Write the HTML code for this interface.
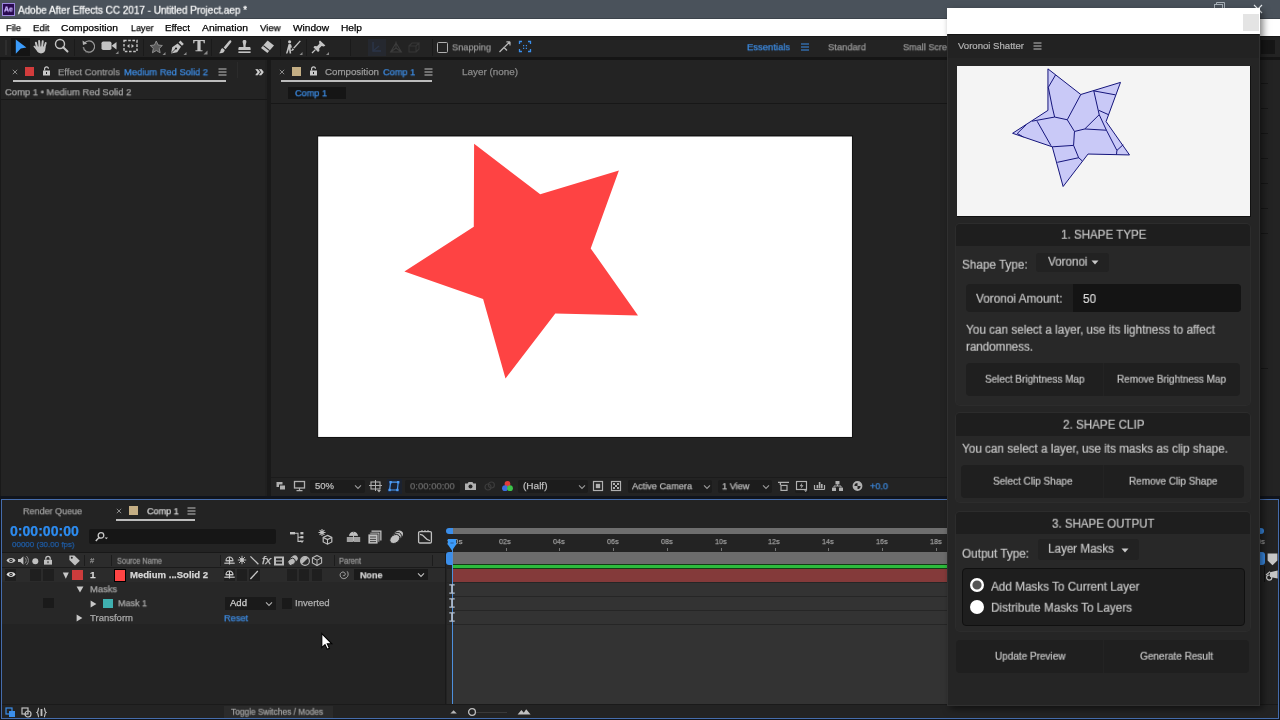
<!DOCTYPE html>
<html lang="en"><head><meta charset="utf-8"><title>Adobe After Effects CC 2017 - Untitled Project.aep</title>
<style>
html,body{margin:0;padding:0;}
body{width:1280px;height:720px;position:relative;overflow:hidden;background:#141414;font-family:"Liberation Sans",sans-serif;}
body>div,body>span,body>svg{position:absolute;display:block;}
.s{-webkit-text-stroke:0.25px currentColor;}
.s2{-webkit-text-stroke:0.2px currentColor;}
.t{white-space:nowrap;transform-origin:0 0;line-height:1;will-change:transform;}
</style></head>
<body>
<div style="left:0px;top:0px;width:1280px;height:720px;background:#191919;"></div>
<div style="left:0px;top:0px;width:1280px;height:19px;background:#4a525b;"></div>
<div style="left:2px;top:2.5px;width:13px;height:13.0px;background:#2a0a52;box-sizing:border-box;border:1px solid #9a86dc;"></div>
<div style="left:0px;top:18px;width:1280px;height:1px;background:#3c434b;"></div>
<span class="t s" style="left:4px;top:9.1px;font-size:7px;color:#c9b6ff;font-weight:bold;transform:translateY(-50%) scaleX(0.9829);">Ae</span>
<span class="t s" style="left:18px;top:9.5px;font-size:10.5px;color:#ffffff;transform:translateY(-50%) scaleX(0.9462);">Adobe After Effects CC 2017 - Untitled Project.aep *</span>
<svg style="left:1213px;top:1px;" width="14" height="8" viewBox="0 0 14 8"><rect x="1.5" y="3.5" width="8" height="6" fill="none" stroke="#a8b0b8" stroke-width="1"/><path d="M3.5 3.5V1.5H11.5V7.5H9.5" fill="none" stroke="#a8b0b8" stroke-width="1"/></svg>
<svg style="left:1252px;top:2px;" width="14" height="14" viewBox="0 0 14 14"><path d="M2 3L10 11M10 3L2 11" stroke="#e8ecf0" stroke-width="1.1" fill="none"/></svg>
<div style="left:0px;top:19px;width:1280px;height:17px;background:#ffffff;"></div>
<span class="t s" style="left:6.4px;top:27.5px;font-size:9.75px;color:#000000;transform:translateY(-50%) scaleX(0.9543);">File</span>
<span class="t s" style="left:33px;top:27.5px;font-size:9.75px;color:#000000;transform:translateY(-50%) scaleX(0.9814);">Edit</span>
<span class="t s" style="left:61px;top:27.5px;font-size:9.75px;color:#000000;transform:translateY(-50%) scaleX(1.0516);">Composition</span>
<span class="t s" style="left:130.5px;top:27.5px;font-size:9.75px;color:#000000;transform:translateY(-50%) scaleX(0.9225);">Layer</span>
<span class="t s" style="left:165px;top:27.5px;font-size:9.75px;color:#000000;transform:translateY(-50%) scaleX(1.0095);">Effect</span>
<span class="t s" style="left:202px;top:27.5px;font-size:9.75px;color:#000000;transform:translateY(-50%) scaleX(1.0609);">Animation</span>
<span class="t s" style="left:260px;top:27.5px;font-size:9.75px;color:#000000;transform:translateY(-50%) scaleX(0.9776);">View</span>
<span class="t s" style="left:293px;top:27.5px;font-size:9.75px;color:#000000;transform:translateY(-50%) scaleX(1.0378);">Window</span>
<span class="t s" style="left:341px;top:27.5px;font-size:9.75px;color:#000000;transform:translateY(-50%) scaleX(1.0467);">Help</span>
<div style="left:0px;top:36px;width:1280px;height:21px;background:#232323;"></div>
<div style="left:0px;top:57px;width:1280px;height:3px;background:#151515;"></div>
<div style="left:0px;top:36px;width:1280px;height:1px;background:#181818;"></div>
<div style="left:5px;top:40px;width:2px;height:15px;background:#2e2e2e;"></div>
<div style="left:11px;top:37.5px;width:18.5px;height:18.0px;background:#141414;"></div>
<svg style="left:11px;top:38px;" width="19" height="19" viewBox="0 0 19 19"><path d="M4.8 1.4L15.4 9.6L9.8 10.6L4.8 15.8Z" fill="#3b9bfa"/></svg>
<svg style="left:31px;top:38px;" width="20" height="19" viewBox="0 0 20 19"><g fill="#c4c4c4"><rect x="5.2" y="3.6" width="2" height="8" rx="1" transform="rotate(-14 6.2 10)"/><rect x="7.6" y="2" width="2" height="9" rx="1" transform="rotate(-4 8.6 10)"/><rect x="10" y="2.2" width="2" height="9" rx="1" transform="rotate(6 11 10)"/><rect x="12.3" y="3.8" width="1.9" height="8" rx="0.95" transform="rotate(16 13.2 10)"/><path d="M5.4 8.6H14.4V11C14.4 13.8 12.6 15.4 10 15.4C7.6 15.4 6.6 14.4 5.6 12.6L2.6 8.8C2.2 7.8 3.4 7.2 4.2 8L5.6 9.6Z"/></g></svg>
<svg style="left:53.2px;top:36.4px;" width="18" height="19" viewBox="0 0 18 19"><circle cx="7" cy="8" r="4.5" fill="none" stroke="#c4c4c4" stroke-width="1.4"/><path d="M10.2 11.2L14.5 15.5" stroke="#c4c4c4" stroke-width="2" stroke-linecap="round"/></svg>
<div style="left:74px;top:39px;width:1px;height:17px;background:#1a1a1a;"></div>
<svg style="left:80px;top:37.4px;" width="18" height="19" viewBox="0 0 18 19"><path d="M4.5 6.2A5.6 5.6 0 1 1 3.4 10" fill="none" stroke="#9a9a9a" stroke-width="1.3"/><path d="M9 15.6A5.6 5.6 0 0 1 3.4 10" fill="none" stroke="#777" stroke-width="1.2" stroke-dasharray="1.2 1.2"/><path d="M2.5 3.5L3 8L7.2 6.6Z" fill="#b0b0b0"/></svg>
<svg style="left:100px;top:37px;" width="20" height="19" viewBox="0 0 20 19"><rect x="1.5" y="4.5" width="10" height="8.5" rx="1.8" fill="#c4c4c4"/><path d="M11.5 8.7L16.5 5V12.5Z" fill="#c4c4c4"/><path d="M18.5 14V17H15.5Z" fill="#8a8a8a"/></svg>
<svg style="left:122px;top:37px;" width="18" height="19" viewBox="0 0 18 19"><rect x="2" y="3.5" width="13" height="11" fill="none" stroke="#c4c4c4" stroke-width="1.4" stroke-dasharray="2.6 1.6"/><path d="M5 9L7.5 7V11ZM12 9L9.5 7V11Z" fill="#c4c4c4"/></svg>
<div style="left:143px;top:39px;width:1px;height:17px;background:#1a1a1a;"></div>
<svg style="left:147px;top:38px;" width="20" height="19" viewBox="0 0 20 19"><path d="M9 2.6L11 7L15.6 7.5L12.2 10.7L13.2 15.4L9 13L4.8 15.4L5.8 10.7L2.4 7.5L7 7Z" fill="#5a5a5a" stroke="#929292" stroke-width="1" transform="translate(1,0.6) scale(.92)"/><path d="M18.5 14V17H15.5Z" fill="#8a8a8a"/></svg>
<svg style="left:168px;top:38px;" width="20" height="19" viewBox="0 0 20 19"><path d="M3 15.5L4.2 9.2L9.6 5.4L13 8.8L9.2 14.2Z" fill="#c4c4c4"/><path d="M10.6 4.4L12.4 2.6L15.8 6L14 7.8Z" fill="#c4c4c4"/><circle cx="8" cy="10.5" r="1.1" fill="#232323"/><path d="M3 15.5L7.4 11" stroke="#232323" stroke-width=".8"/><path d="M18.5 14V17H15.5Z" fill="#8a8a8a"/></svg>
<span class="t s" style="left:192.5px;top:45.8px;font-size:16px;color:#c4c4c4;font-weight:bold;font-family:'Liberation Serif',serif;transform:translateY(-50%) scaleX(1.1245);">T</span>
<svg style="left:203px;top:50px;" width="5" height="5" viewBox="0 0 5 5"><path d="M4.5 0.5V4.5H0.5Z" fill="#8a8a8a"/></svg>
<div style="left:211px;top:39px;width:1px;height:17px;background:#1a1a1a;"></div>
<svg style="left:216px;top:38px;" width="18" height="19" viewBox="0 0 18 19"><path d="M14.6 2.2C15.6 2.8 15.6 3.8 15 4.6L9.6 11.2L7.6 9.6L13 3C13.4 2.4 14 2 14.6 2.2Z" fill="#c4c4c4"/><path d="M7 10.4L8.8 12C8.6 14.4 6 15.8 3 15.2C4.6 14.4 4.4 12.6 5 11.6C5.4 10.8 6.2 10.2 7 10.4Z" fill="#c4c4c4"/></svg>
<svg style="left:235px;top:38px;" width="19" height="19" viewBox="0 0 19 19"><path d="M7.6 3.4C7.6 1.6 11.4 1.6 11.4 3.4C11.4 5 10.4 6 10.6 9H14.4C15.2 9 15.6 9.6 15.6 10.4V12H3.4V10.4C3.4 9.6 3.8 9 4.6 9H8.4C8.6 6 7.6 5 7.6 3.4Z" fill="#c4c4c4"/><rect x="3.4" y="13.4" width="12.2" height="1.6" fill="#c4c4c4"/></svg>
<svg style="left:258px;top:38px;" width="19" height="19" viewBox="0 0 19 19"><path d="M9.6 2.6L16 7.6L9.4 15L3 10Z" fill="#c4c4c4"/><path d="M5.4 7.6L11.6 12.6" stroke="#232323" stroke-width="1.2"/></svg>
<div style="left:280px;top:39px;width:1px;height:17px;background:#1a1a1a;"></div>
<svg style="left:284px;top:38px;" width="20" height="19" viewBox="0 0 20 19"><circle cx="5.6" cy="3.8" r="1.6" fill="#c4c4c4"/><path d="M4.6 6L7 6.2L8 9.4L6.6 9.8L7.2 15.4H5.6L5 11L3.4 15.4H2L3.6 9.6Z" fill="#c4c4c4"/><path d="M15.8 2.4L16.8 3.2L10.4 10.6L9.2 9.8Z" fill="#c4c4c4"/><path d="M8.8 10.2L10 11.2C9.6 12.6 8 13.2 6.8 12.8C7.8 12.2 7.8 10.8 8.8 10.2Z" fill="#c4c4c4"/><path d="M18.5 14V17H15.5Z" fill="#8a8a8a"/></svg>
<div style="left:306px;top:39px;width:1px;height:17px;background:#1a1a1a;"></div>
<svg style="left:309px;top:38px;" width="22" height="19" viewBox="0 0 22 19"><path d="M11 2.4L16.4 7.6L14.8 8.4L12.6 8L10.2 10.6L10.4 13L9 14L4.4 9.2L5.6 8L8 8.2L10.4 5.8L10 3.6Z" fill="#c4c4c4"/><path d="M6.4 11.6L3 15" stroke="#c4c4c4" stroke-width="1.3"/><path d="M20 14V17H17Z" fill="#8a8a8a"/></svg>
<div style="left:350px;top:39px;width:1px;height:17px;background:#1a1a1a;"></div>
<div style="left:368px;top:39px;width:18px;height:17px;background:#25282f;"></div>
<svg style="left:368px;top:38px;" width="18" height="19" viewBox="0 0 18 19"><path d="M5 4V13H13" fill="none" stroke="#2b3549" stroke-width="1.4"/><path d="M5 13L11 8" stroke="#2b3549" stroke-width="1.2"/></svg>
<svg style="left:387px;top:38px;" width="18" height="19" viewBox="0 0 18 19"><path d="M9 3.5V10M9 10L3.6 14M9 10L14.4 14M3.6 14H14.4L9 5Z" fill="none" stroke="#3c3c3c" stroke-width="1.1"/></svg>
<svg style="left:405px;top:38px;" width="18" height="19" viewBox="0 0 18 19"><path d="M4 8H11V14H4ZM4 8L7 5H14L11 8M14 5V11L11 14" fill="none" stroke="#363636" stroke-width="1.1"/></svg>
<div style="left:432px;top:39px;width:1px;height:17px;background:#1a1a1a;"></div>
<div style="left:437px;top:42px;width:11px;height:11px;background:transparent;box-sizing:border-box;border:1.3px solid #b0b0b0;border-radius:1.5px;"></div>
<span class="t s" style="left:452px;top:48px;font-size:9.25px;color:#969696;transform:translateY(-50%) scaleX(0.9976);">Snapping</span>
<svg style="left:497px;top:39px;" width="16" height="16" viewBox="0 0 16 16"><path d="M2.5 13L7 8.5L10 11.5" fill="none" stroke="#b8b8b8" stroke-width="1.3"/><path d="M7.5 8L13 2.8M13 2.8H9.4M13 2.8V6.4" fill="none" stroke="#b8b8b8" stroke-width="1.2"/></svg>
<svg style="left:517px;top:39px;" width="16" height="16" viewBox="0 0 16 16"><path d="M2.5 5V2.5H5M11 2.5H13.5V5M13.5 10V12.5H11M5 12.5H2.5V10" fill="none" stroke="#3b8eea" stroke-width="1.3"/><path d="M6 6H7.2V7.2H6ZM8.8 6H10V7.2H8.8ZM6 8.8H7.2V10H6ZM8.8 8.8H10V10H8.8Z" fill="#3b8eea"/></svg>
<span class="t s" style="left:747px;top:47px;font-size:9.5px;color:#3d8de6;transform:translateY(-50%) scaleX(0.9928);">Essentials</span>
<svg style="left:800px;top:42px;" width="10" height="10" viewBox="0 0 10 10"><path d="M1 2H9M1 5H9M1 8H9" stroke="#3b8eea" stroke-width="1.1"/></svg>
<span class="t s" style="left:828px;top:47px;font-size:9.5px;color:#9a9a9a;transform:translateY(-50%) scaleX(0.9854);">Standard</span>
<span class="t s" style="left:903px;top:47px;font-size:9.5px;color:#9a9a9a;transform:translateY(-50%) scaleX(0.9567);">Small Scree</span>
<div style="left:1261px;top:40px;width:14px;height:14px;background:#161616;"></div>
<div style="left:1px;top:60px;width:266px;height:436px;background:#232323;"></div>
<div style="left:265px;top:60px;width:2px;height:436px;background:#202020;"></div>
<svg style="left:12.4px;top:69.3px;" width="6" height="6" viewBox="0 0 6 6"><path d="M0.8 0.8L5.2 5.2M5.2 0.8L0.8 5.2" stroke="#8a8a8a" stroke-width="1"/></svg>
<div style="left:25.4px;top:66.5px;width:9.0px;height:9.0px;background:#d23c3c;"></div>
<svg style="left:42px;top:66px;" width="9" height="10" viewBox="0 0 9 10"><rect x="1" y="4.5" width="7" height="5" fill="#c8c8c8"/><path d="M2.6 4.5V2.8A1.9 1.9 0 0 1 6.4 2.8" fill="none" stroke="#c8c8c8" stroke-width="1.2"/><rect x="4" y="6" width="1" height="2" fill="#232323"/></svg>
<span class="t s" style="left:57.8px;top:72px;font-size:9.5px;color:#9a9a9a;transform:translateY(-50%) scaleX(0.9945);">Effect Controls</span>
<span class="t s" style="left:124px;top:72px;font-size:9.5px;color:#3d8de6;transform:translateY(-50%) scaleX(0.9819);">Medium Red Solid 2</span>
<svg style="left:218px;top:68px;" width="9" height="8" viewBox="0 0 9 8"><path d="M0.5 1H8.5M0.5 4H8.5M0.5 7H8.5" stroke="#c0c0c0" stroke-width="1.1"/></svg>
<span class="t s" style="left:255px;top:71px;font-size:14px;color:#d0d0d0;font-weight:bold;transform:translateY(-50%) scaleX(1.1543);">»</span>
<div style="left:13px;top:80px;width:213px;height:2px;background:#bcbcbc;"></div>
<span class="t s" style="left:5.4px;top:92px;font-size:9.5px;color:#a8a8a8;transform:translateY(-50%) scaleX(0.9904);">Comp 1 • Medium Red Solid 2</span>
<div style="left:1px;top:99px;width:266px;height:1px;background:#171717;"></div>
<div style="left:237px;top:62px;width:1px;height:16px;background:#2b2b2b;"></div>
<div style="left:271px;top:60px;width:987px;height:436px;background:#232323;"></div>
<svg style="left:279px;top:69.3px;" width="6" height="6" viewBox="0 0 6 6"><path d="M0.8 0.8L5.2 5.2M5.2 0.8L0.8 5.2" stroke="#8a8a8a" stroke-width="1"/></svg>
<div style="left:292px;top:66.5px;width:9px;height:9.0px;background:#c4ae84;"></div>
<svg style="left:309px;top:66px;" width="9" height="10" viewBox="0 0 9 10"><rect x="1" y="4.5" width="7" height="5" fill="#c8c8c8"/><path d="M2.6 4.5V2.8A1.9 1.9 0 0 1 6.4 2.8" fill="none" stroke="#c8c8c8" stroke-width="1.2"/><rect x="4" y="6" width="1" height="2" fill="#232323"/></svg>
<span class="t s" style="left:324.7px;top:72px;font-size:9.5px;color:#9a9a9a;transform:translateY(-50%) scaleX(1.0225);">Composition</span>
<span class="t s" style="left:382.5px;top:72px;font-size:9.5px;color:#3d8de6;transform:translateY(-50%) scaleX(0.968);">Comp 1</span>
<svg style="left:424px;top:68px;" width="9" height="8" viewBox="0 0 9 8"><path d="M0.5 1H8.5M0.5 4H8.5M0.5 7H8.5" stroke="#c0c0c0" stroke-width="1.1"/></svg>
<div style="left:280.5px;top:80px;width:151.8px;height:2px;background:#bcbcbc;"></div>
<span class="t s" style="left:462px;top:72px;font-size:9.5px;color:#8a8a8a;transform:translateY(-50%) scaleX(1.0394);">Layer (none)</span>
<div style="left:288px;top:87px;width:58px;height:11.5px;background:#151515;"></div>
<span class="t s" style="left:295px;top:92.5px;font-size:9.5px;color:#3d8de6;transform:translateY(-50%) scaleX(0.962);">Comp 1</span>
<div style="left:271px;top:102.5px;width:987px;height:1.0px;background:#171717;"></div>
<svg style="left:316px;top:134px;" width="540" height="306" viewBox="316 134 540 306"><rect x="317.7" y="136" width="534.7" height="301.4" fill="#ffffff" stroke="#000" stroke-width="0.9"/><polygon points="474.1,143.7 540.2,194.3 618.9,170.4 590.7,248.4 638,315.6 555.3,313.4 505.5,378.4 483.1,299 404.4,271.5 473.8,226.8" fill="#fe4343"/></svg>
<div style="left:271px;top:477px;width:987px;height:1px;background:#1b1b1b;"></div>
<div style="left:310px;top:479.5px;width:55px;height:13.5px;background:#1c1c1c;border-radius:2px;"></div>
<div style="left:405px;top:479.5px;width:55px;height:13.5px;background:#1c1c1c;border-radius:2px;"></div>
<div style="left:518px;top:479.5px;width:70px;height:13.5px;background:#1c1c1c;border-radius:2px;"></div>
<div style="left:627.5px;top:479.5px;width:84.5px;height:13.5px;background:#1c1c1c;border-radius:2px;"></div>
<div style="left:717.5px;top:479.5px;width:54.0px;height:13.5px;background:#1c1c1c;border-radius:2px;"></div>
<div style="left:794.5px;top:479.5px;width:14.5px;height:13.5px;background:#1c1c1c;border-radius:2px;"></div>
<svg style="left:275px;top:480px;" width="12" height="12" viewBox="0 0 12 12"><rect x="1.5" y="2" width="6" height="5" fill="#b0b0b0"/><rect x="4.5" y="5" width="6" height="5" fill="#b0b0b0" stroke="#232323" stroke-width="1"/></svg>
<svg style="left:293px;top:480px;" width="13" height="12" viewBox="0 0 13 12"><rect x="1.5" y="1.5" width="10" height="6.5" fill="none" stroke="#b0b0b0" stroke-width="1.3"/><path d="M6.5 8V10.4M3.5 10.6H9.5" stroke="#b0b0b0" stroke-width="1.2"/></svg>
<span class="t s" style="left:314.7px;top:486px;font-size:9.5px;color:#bdbdbd;transform:translateY(-50%) scaleX(1.0044);">50%</span>
<svg style="left:354.4px;top:483.5px;" width="8" height="6" viewBox="0 0 8 6"><path d="M1 1.4L4 4.4L7 1.4" fill="none" stroke="#9a9a9a" stroke-width="1.1"/></svg>
<svg style="left:369px;top:480px;" width="13" height="13" viewBox="0 0 13 13"><rect x="2" y="2" width="9" height="7" fill="none" stroke="#b0b0b0" stroke-width="1.1"/><path d="M6.5 0V11M0 5.5H13" stroke="#b0b0b0" stroke-width="1"/><path d="M8 10H12L10 12.5Z" fill="#b0b0b0"/></svg>
<div style="left:386.5px;top:478.5px;width:15.0px;height:15.0px;background:#1b2230;"></div>
<svg style="left:387px;top:479px;" width="14" height="14" viewBox="0 0 14 14"><path d="M3.6 3.2H11.2L10.4 11H2.6Z" fill="none" stroke="#4b9bf5" stroke-width="1.2"/><rect x="2.4" y="2" width="2.4" height="2.4" fill="#4b9bf5"/><rect x="10" y="2" width="2.4" height="2.4" fill="#4b9bf5"/><rect x="1.4" y="9.8" width="2.4" height="2.4" fill="#4b9bf5"/><rect x="9.2" y="9.8" width="2.4" height="2.4" fill="#4b9bf5"/></svg>
<span class="t s" style="left:410.4px;top:486px;font-size:9.5px;color:#6c6c6c;transform:translateY(-50%) scaleX(0.9976);">0:00:00:00</span>
<svg style="left:464px;top:480px;" width="13" height="12" viewBox="0 0 13 12"><path d="M1 3.4H3.6L4.6 2H8.4L9.4 3.4H12V10H1Z" fill="#b0b0b0"/><circle cx="6.5" cy="6.6" r="2" fill="#232323"/></svg>
<svg style="left:483px;top:480px;" width="13" height="12" viewBox="0 0 13 12"><circle cx="5" cy="7" r="3" fill="none" stroke="#3c3c3c" stroke-width="1.2"/><circle cx="8.4" cy="5" r="3" fill="none" stroke="#3c3c3c" stroke-width="1.2"/></svg>
<svg style="left:501px;top:480px;" width="13" height="13" viewBox="0 0 13 13"><circle cx="6.5" cy="4" r="2.9" fill="#e23c3c"/><circle cx="4" cy="8.2" r="2.9" fill="#3c6ee2"/><circle cx="9" cy="8.2" r="2.9" fill="#3cc24a"/></svg>
<span class="t s" style="left:522.5px;top:486px;font-size:9.5px;color:#bdbdbd;transform:translateY(-50%) scaleX(1.0545);">(Half)</span>
<svg style="left:577.5px;top:483.5px;" width="8" height="6" viewBox="0 0 8 6"><path d="M1 1.4L4 4.4L7 1.4" fill="none" stroke="#9a9a9a" stroke-width="1.1"/></svg>
<svg style="left:592px;top:480px;" width="12" height="12" viewBox="0 0 12 12"><rect x="1.5" y="1.5" width="9" height="9" fill="none" stroke="#b0b0b0" stroke-width="1.2"/><rect x="3.8" y="3.8" width="4.4" height="4.4" fill="#b0b0b0"/></svg>
<svg style="left:610px;top:480px;" width="12" height="12" viewBox="0 0 12 12"><rect x="1.5" y="1.5" width="9" height="9" fill="none" stroke="#b0b0b0" stroke-width="1.2"/><path d="M3 3H5V5H3ZM7 3H9V5H7ZM5 5H7V7H5ZM3 7H5V9H3ZM7 7H9V9H7Z" fill="#b0b0b0"/></svg>
<span class="t s" style="left:631.9px;top:486px;font-size:9.5px;color:#bdbdbd;transform:translateY(-50%) scaleX(0.9645);">Active Camera</span>
<svg style="left:702.8px;top:483.5px;" width="8" height="6" viewBox="0 0 8 6"><path d="M1 1.4L4 4.4L7 1.4" fill="none" stroke="#9a9a9a" stroke-width="1.1"/></svg>
<span class="t s" style="left:722px;top:486px;font-size:9.5px;color:#bdbdbd;transform:translateY(-50%) scaleX(0.9667);">1 View</span>
<svg style="left:761.8px;top:483.5px;" width="8" height="6" viewBox="0 0 8 6"><path d="M1 1.4L4 4.4L7 1.4" fill="none" stroke="#9a9a9a" stroke-width="1.1"/></svg>
<svg style="left:777px;top:480px;" width="13" height="12" viewBox="0 0 13 12"><path d="M1 2.4H12M3.4 2.4V5" stroke="#b0b0b0" stroke-width="1.3"/><rect x="4" y="5.4" width="6" height="5" fill="none" stroke="#b0b0b0" stroke-width="1.2"/></svg>
<svg style="left:795px;top:480px;" width="13" height="12" viewBox="0 0 13 12"><rect x="1.5" y="1.5" width="10" height="8" fill="none" stroke="#b0b0b0" stroke-width="1.2"/><path d="M7.4 2.6L4.6 6.2H6.6L5.6 9L8.6 5.2H6.6Z" fill="#b0b0b0"/><path d="M9 10.2H12.4L10.7 12Z" fill="#b0b0b0"/></svg>
<svg style="left:813px;top:480px;" width="13" height="12" viewBox="0 0 13 12"><path d="M1.5 9.5H11.5M1.5 9.5V5M11.5 9.5V5" stroke="#b0b0b0" stroke-width="1.2" fill="none"/><rect x="3.6" y="5" width="1.6" height="3.4" fill="#b0b0b0"/><rect x="5.8" y="2" width="1.6" height="6.4" fill="#b0b0b0"/><rect x="8" y="4" width="1.6" height="4.4" fill="#b0b0b0"/></svg>
<svg style="left:831px;top:480px;" width="13" height="12" viewBox="0 0 13 12"><rect x="4.5" y="1" width="4" height="3.4" fill="#b0b0b0"/><rect x="1" y="7.6" width="4" height="3.4" fill="#b0b0b0"/><rect x="8" y="7.6" width="4" height="3.4" fill="#b0b0b0"/><path d="M6.5 4.4V6H3V7.6M6.5 6H10V7.6" fill="none" stroke="#b0b0b0" stroke-width="1"/></svg>
<svg style="left:851px;top:480px;" width="13" height="12" viewBox="0 0 13 12"><circle cx="6.5" cy="6" r="4" fill="none" stroke="#b0b0b0" stroke-width="1.8"/><path d="M6.5 2A4 4 0 0 1 10.5 6H6.5Z" fill="#b0b0b0"/><path d="M6.5 10A4 4 0 0 1 2.5 6H6.5Z" fill="#b0b0b0"/></svg>
<span class="t s" style="left:869.8px;top:486px;font-size:9.5px;color:#3d8de6;transform:translateY(-50%) scaleX(0.9592);">+0.0</span>
<div style="left:1261px;top:82.5px;width:7px;height:1.0px;background:#171717;"></div>
<div style="left:1261px;top:107.5px;width:7px;height:1.0px;background:#171717;"></div>
<div style="left:1261px;top:132.5px;width:7px;height:1.0px;background:#171717;"></div>
<div style="left:1261px;top:158.0px;width:7px;height:1.0px;background:#171717;"></div>
<div style="left:1261px;top:183.0px;width:7px;height:1.0px;background:#171717;"></div>
<div style="left:1261px;top:208.0px;width:7px;height:1.0px;background:#171717;"></div>
<div style="left:1261px;top:233.0px;width:7px;height:1.0px;background:#171717;"></div>
<div style="left:1261px;top:367.8px;width:7px;height:1.0px;background:#171717;"></div>
<div style="left:1258px;top:60px;width:2px;height:436px;background:#1c1c1c;"></div>
<div style="left:1260px;top:60px;width:20px;height:436px;background:#232323;"></div>
<div style="left:1261px;top:82.5px;width:7px;height:1.0px;background:#171717;"></div>
<div style="left:1261px;top:107.5px;width:7px;height:1.0px;background:#171717;"></div>
<div style="left:1261px;top:132.5px;width:7px;height:1.0px;background:#171717;"></div>
<div style="left:1261px;top:158.0px;width:7px;height:1.0px;background:#171717;"></div>
<div style="left:1261px;top:183.0px;width:7px;height:1.0px;background:#171717;"></div>
<div style="left:1261px;top:208.0px;width:7px;height:1.0px;background:#171717;"></div>
<div style="left:1261px;top:233.0px;width:7px;height:1.0px;background:#171717;"></div>
<div style="left:1261px;top:367.8px;width:7px;height:1.0px;background:#171717;"></div>
<div style="left:0px;top:496px;width:1280px;height:224px;background:#10141c;"></div>
<div style="left:1px;top:499px;width:1278px;height:220px;background:#456cab;"></div>
<div style="left:2px;top:500px;width:1276px;height:218px;background:#232323;"></div>
<span class="t s" style="left:23.4px;top:511px;font-size:9.5px;color:#a0a0a0;transform:translateY(-50%) scaleX(0.9482);">Render Queue</span>
<svg style="left:115.7px;top:508.3px;" width="6" height="6" viewBox="0 0 6 6"><path d="M0.8 0.8L5.2 5.2M5.2 0.8L0.8 5.2" stroke="#8a8a8a" stroke-width="1"/></svg>
<div style="left:129px;top:506px;width:9px;height:8.5px;background:#c4ae84;"></div>
<span class="t s" style="left:146.9px;top:511px;font-size:9.5px;color:#d8d8d8;transform:translateY(-50%) scaleX(0.9529);">Comp 1</span>
<svg style="left:187px;top:507px;" width="9" height="8" viewBox="0 0 9 8"><path d="M0.5 1H8.5M0.5 4H8.5M0.5 7H8.5" stroke="#c0c0c0" stroke-width="1.1"/></svg>
<div style="left:116.4px;top:519px;width:78.9px;height:2px;background:#bcbcbc;"></div>
<span class="t s" style="left:10.2px;top:531.3px;font-size:14px;color:#2d8cf0;font-weight:bold;transform:translateY(-50%) scaleX(1.0044);">0:00:00:00</span>
<span class="t s" style="left:11.7px;top:545px;font-size:8px;color:#1f5da6;transform:translateY(-50%) scaleX(0.9965);">00000 (30.00 fps)</span>
<div style="left:89px;top:528.5px;width:187px;height:15.0px;background:#161616;border-radius:2px;"></div>
<svg style="left:94px;top:530px;" width="16" height="13" viewBox="0 0 16 13"><circle cx="7" cy="5.4" r="2.8" fill="none" stroke="#c8c8c8" stroke-width="1.3"/><path d="M5 7.6L1.8 11" stroke="#c8c8c8" stroke-width="1.5"/><path d="M10.6 7.4H14L12.3 9.2Z" fill="#c8c8c8"/></svg>
<svg style="left:289px;top:529px;" width="16" height="16" viewBox="0 0 16 16"><rect x="1" y="3" width="5" height="2.4" fill="#c0c0c0"/><path d="M6 4.2H9V12.4H12M9 8.2H12" fill="none" stroke="#c0c0c0" stroke-width="1.1"/><rect x="11.4" y="3" width="3" height="2.4" fill="#c0c0c0"/><rect x="11.4" y="7" width="3" height="2.4" fill="#c0c0c0"/><path d="M11 11.6H15L13 14Z" fill="#c0c0c0"/></svg>
<svg style="left:317px;top:528px;" width="17" height="18" viewBox="0 0 17 18"><path d="M5 1V8M1.5 4.5H8.5M2.6 2.1L7.4 6.9M7.4 2.1L2.6 6.9" stroke="#c0c0c0" stroke-width="1.1"/><path d="M10.5 7.4L14.8 9.4V14L10.5 16.2L6.2 14V9.4Z" fill="none" stroke="#c0c0c0" stroke-width="1.2"/><path d="M6.2 9.4L10.5 11.6L14.8 9.4M10.5 11.6V16.2" fill="none" stroke="#c0c0c0" stroke-width="1.1"/></svg>
<svg style="left:345.6px;top:531px;" width="15" height="12" viewBox="0 0 15 12"><path d="M3 5.2A4.5 4.4 0 0 1 12 5.2Z" fill="#c0c0c0"/><rect x="0.8" y="6" width="13.4" height="5" fill="#c0c0c0" opacity=".8"/><path d="M7.5 1.6V10.4M3.4 5.4H11.6" stroke="#232323" stroke-width="1"/><path d="M7.5 2V10" stroke="#e0e0e0" stroke-width=".8"/></svg>
<svg style="left:367px;top:529px;" width="16" height="16" viewBox="0 0 16 16"><rect x="4.5" y="1.5" width="10" height="10" fill="#c0c0c0"/><rect x="2.8" y="3.2" width="10" height="10" fill="#c0c0c0" stroke="#232323" stroke-width=".8"/><rect x="1" y="5" width="10" height="10" fill="#c0c0c0" stroke="#232323" stroke-width=".8"/><path d="M3 8H9M3 10.4H9M3 12.6H9" stroke="#232323" stroke-width=".8"/></svg>
<svg style="left:388px;top:529px;" width="17" height="16" viewBox="0 0 17 16"><ellipse cx="10" cy="6" rx="5.4" ry="4" fill="#c0c0c0" transform="rotate(-35 10 6)"/><ellipse cx="8.4" cy="8" rx="5.4" ry="4" fill="#c0c0c0" stroke="#232323" stroke-width=".9" transform="rotate(-35 8.4 8)"/><ellipse cx="6.8" cy="10" rx="5.4" ry="4" fill="#c0c0c0" stroke="#232323" stroke-width=".9" transform="rotate(-35 6.8 10)"/></svg>
<svg style="left:417px;top:529px;" width="16" height="16" viewBox="0 0 16 16"><rect x="1.6" y="2.6" width="12.8" height="11.4" rx="1.2" fill="none" stroke="#c0c0c0" stroke-width="1.3"/><path d="M3 5.4C8 5.4 8 11.6 13 11.6" fill="none" stroke="#c0c0c0" stroke-width="1.2"/><path d="M5 2V1M8 2V1M11 2V1" stroke="#c0c0c0" stroke-width="1"/></svg>
<div style="left:2px;top:553px;width:444px;height:14px;background:#2c2c2c;"></div>
<div style="left:2px;top:552px;width:444px;height:1px;background:#181818;"></div>
<svg style="left:5.5px;top:557.0px;" width="10" height="7" viewBox="0 0 10 7"><path d="M0.5 3.5C2.6 0.3 7.4 0.3 9.5 3.5C7.4 6.7 2.6 6.7 0.5 3.5Z" fill="#c8c8c8"/><circle cx="5" cy="3.5" r="1.7" fill="#232323"/><circle cx="5" cy="3.5" r="0.7" fill="#c8c8c8"/></svg>
<svg style="left:17px;top:555px;" width="12" height="11" viewBox="0 0 12 11"><path d="M1 4H3.4L6.4 1.2V9.8L3.4 7H1Z" fill="#c0c0c0"/><path d="M8 2.6A4 4 0 0 1 8 8.4M9.4 1A6 6 0 0 1 9.4 10" fill="none" stroke="#8a8a8a" stroke-width="1"/></svg>
<svg style="left:32px;top:557.5px;" width="7" height="7" viewBox="0 0 7 7"><circle cx="3.3" cy="3.3" r="3" fill="#c0c0c0"/></svg>
<svg style="left:42.8px;top:554.5px;" width="10" height="11" viewBox="0 0 10 11"><rect x="1" y="4.8" width="8" height="4.8" fill="#c0c0c0"/><path d="M2.8 4.8V3.6A2.2 2.2 0 0 1 7.2 3.6V4.8" fill="none" stroke="#c0c0c0" stroke-width="1.3"/><rect x="4.5" y="6.2" width="1" height="2" fill="#232323"/></svg>
<svg style="left:68px;top:554px;" width="13" height="13" viewBox="0 0 13 13"><path d="M1.4 1.4H6.4L11.8 6.8L7 11.6L1.4 6Z" fill="#c0c0c0"/><circle cx="3.8" cy="3.8" r="1" fill="#232323"/></svg>
<div style="left:83.5px;top:555px;width:1.0px;height:11px;background:#1c1c1c;"></div>
<span class="t s" style="left:90px;top:560.7px;font-size:7.5px;color:#8a8a8a;transform:translateY(-50%) scaleX(1.0067);">#</span>
<div style="left:111px;top:555px;width:1px;height:11px;background:#1c1c1c;"></div>
<span class="t s" style="left:116.5px;top:560.5px;font-size:8.5px;color:#9a9a9a;transform:translateY(-50%) scaleX(0.864);">Source Name</span>
<div style="left:219.5px;top:555px;width:1.0px;height:11px;background:#1c1c1c;"></div>
<svg style="left:224.3px;top:555.8px;" width="11" height="9" viewBox="0 0 11 9"><path d="M2 4.7A3.5 3.7 0 0 1 9 4.7Z" fill="none" stroke="#c4c4c4" stroke-width="1.1"/><path d="M5.5 1V8.4M2 4.7H9" stroke="#c4c4c4" stroke-width="1.1" fill="none"/><path d="M0.3 7.2H10.7" stroke="#c4c4c4" stroke-width="1.2"/></svg>
<svg style="left:237px;top:555.3px;" width="10" height="10" viewBox="0 0 10 10"><circle cx="5" cy="5" r="1.9" fill="#c4c4c4"/><path d="M5 0.8V9.2M0.8 5H9.2M2 2L8 8M8 2L2 8" stroke="#c4c4c4" stroke-width=".9"/></svg>
<svg style="left:249px;top:555px;" width="11" height="11" viewBox="0 0 11 11"><path d="M1.4 1.4L9.4 9.2" stroke="#c4c4c4" stroke-width="1.3"/></svg>
<span class="t s" style="left:262.3px;top:559.8px;font-size:11px;color:#c4c4c4;font-style:italic;transform:translateY(-50%) scaleX(1.0861);">fx</span>
<svg style="left:273px;top:554.5px;" width="12" height="12" viewBox="0 0 12 12"><rect x="1" y="1.5" width="10" height="9" fill="#b8b8b8"/><rect x="3" y="3.4" width="6" height="2" fill="#232323"/><rect x="3" y="6.6" width="6" height="2" fill="#232323"/></svg>
<svg style="left:285.5px;top:554px;" width="13" height="13" viewBox="0 0 13 13"><ellipse cx="8" cy="5" rx="4" ry="3.2" fill="#b8b8b8" transform="rotate(-35 8 5)"/><ellipse cx="5.6" cy="7.8" rx="4" ry="3.2" fill="#b8b8b8" stroke="#232323" stroke-width=".9" transform="rotate(-35 5.6 7.8)"/></svg>
<svg style="left:298.5px;top:554.5px;" width="12" height="12" viewBox="0 0 12 12"><circle cx="6" cy="6" r="4.4" fill="none" stroke="#b8b8b8" stroke-width="1.2"/><path d="M2.9 9.1A4.4 4.4 0 0 1 9.1 2.9Z" fill="#b8b8b8"/></svg>
<svg style="left:311px;top:554px;" width="12" height="13" viewBox="0 0 12 13"><path d="M6 1.4L10.6 3.8V9L6 11.6L1.4 9V3.8Z" fill="none" stroke="#b8b8b8" stroke-width="1.1"/><path d="M1.4 3.8L6 6.2L10.6 3.8M6 6.2V11.6" fill="none" stroke="#b8b8b8" stroke-width="1"/></svg>
<div style="left:334px;top:555px;width:1px;height:11px;background:#1c1c1c;"></div>
<span class="t s" style="left:339px;top:560.5px;font-size:8.5px;color:#9a9a9a;transform:translateY(-50%) scaleX(0.8784);">Parent</span>
<div style="left:431.5px;top:555px;width:1.0px;height:11px;background:#1c1c1c;"></div>
<div style="left:2px;top:567px;width:444px;height:1px;background:#1b1b1b;"></div>
<div style="left:2px;top:568px;width:444px;height:14px;background:#2b2b2b;"></div>
<div style="left:4.8px;top:569px;width:11.0px;height:11.5px;background:#1f1f1f;"></div>
<svg style="left:5.5px;top:571.1px;" width="10" height="7" viewBox="0 0 10 7"><path d="M0.5 3.5C2.6 0.3 7.4 0.3 9.5 3.5C7.4 6.7 2.6 6.7 0.5 3.5Z" fill="#e0e0e0"/><circle cx="5" cy="3.5" r="1.7" fill="#232323"/><circle cx="5" cy="3.5" r="0.7" fill="#e0e0e0"/></svg>
<div style="left:30px;top:569px;width:11px;height:11.5px;background:#1f1f1f;"></div>
<div style="left:43px;top:569px;width:10.5px;height:11.5px;background:#1f1f1f;"></div>
<svg style="left:61.5px;top:571.8px;" width="8" height="8" viewBox="0 0 8 8"><path d="M0.8 0.6H6.8L3.8 6.8Z" fill="#c8c8c8"/></svg>
<div style="left:72px;top:569.5px;width:10.7px;height:10.5px;background:#cc3c3c;"></div>
<span class="t s" style="left:90px;top:575px;font-size:9.5px;color:#d6d6d6;font-weight:bold;transform:translateY(-50%) scaleX(1.0572);">1</span>
<div style="left:114px;top:569px;width:12px;height:12.5px;background:#ff4444;box-sizing:border-box;border:1px solid #000;"></div>
<span class="t s" style="left:130px;top:575px;font-size:9.5px;color:#d6d6d6;font-weight:bold;transform:translateY(-50%) scaleX(1.0052);">Medium ...Solid 2</span>
<div style="left:224px;top:569px;width:11.3px;height:11.5px;background:#1f1f1f;"></div>
<svg style="left:224.3px;top:570px;" width="11" height="9" viewBox="0 0 11 9"><path d="M2 4.7A3.5 3.7 0 0 1 9 4.7Z" fill="none" stroke="#d0d0d0" stroke-width="1.1"/><path d="M5.5 1V8.4M2 4.7H9" stroke="#d0d0d0" stroke-width="1.1" fill="none"/><path d="M0.3 7.2H10.7" stroke="#d0d0d0" stroke-width="1.2"/></svg>
<div style="left:237.2px;top:569px;width:10.3px;height:11.5px;background:#1f1f1f;"></div>
<div style="left:249.4px;top:569px;width:10.3px;height:11.5px;background:#1f1f1f;"></div>
<svg style="left:248px;top:569px;" width="12" height="12" viewBox="0 0 12 12"><path d="M2.4 10L9.8 2" stroke="#c8c8c8" stroke-width="1.3"/></svg>
<div style="left:287px;top:569px;width:10.2px;height:11.5px;background:#1f1f1f;"></div>
<div style="left:299.4px;top:569px;width:10.0px;height:11.5px;background:#1f1f1f;"></div>
<div style="left:311.8px;top:569px;width:10.2px;height:11.5px;background:#1f1f1f;"></div>
<svg style="left:337.2px;top:568px;" width="13" height="13" viewBox="0 0 13 13"><polyline points="6.0,7.3 6.1,7.5 6.3,7.6 6.6,7.7 6.9,7.7 7.2,7.7 7.5,7.6 7.7,7.3 8.0,7.1 8.1,6.7 8.2,6.3 8.2,5.8 8.1,5.4 7.8,5.0 7.5,4.6 7.0,4.3 6.5,4.1 5.9,4.1 5.3,4.1 4.7,4.4 4.2,4.7 3.7,5.2 3.4,5.8 3.2,6.5 3.2,7.3 3.3,8.0 3.6,8.8 4.1,9.4 4.8,10.0 5.5,10.3 6.4,10.6 7.3,10.6 8.2,10.3 9.1,9.9 9.8,9.3 10.5,8.5 10.9,7.6 11.1,6.5 11.0,5.4 10.8,4.4 10.2,3.4" fill="none" stroke="#b0b0b0" stroke-width="1"/></svg>
<div style="left:354.4px;top:569.3px;width:73.2px;height:10.7px;background:#1a1a1a;"></div>
<span class="t s" style="left:359.6px;top:574.8px;font-size:9.5px;color:#d4d4d4;font-weight:bold;transform:translateY(-50%) scaleX(0.9432);">None</span>
<svg style="left:417.2px;top:571.8px;" width="8" height="6" viewBox="0 0 8 6"><path d="M1 1.4L4 4.4L7 1.4" fill="none" stroke="#c0c0c0" stroke-width="1.1"/></svg>
<div style="left:2px;top:582px;width:443px;height:42px;background:#272727;"></div>
<svg style="left:75.5px;top:585.5px;" width="8" height="7" viewBox="0 0 8 7"><path d="M0.6 0.6H7.4L4 6.4Z" fill="#c8c8c8"/></svg>
<span class="t s" style="left:90px;top:589.2px;font-size:9.5px;color:#a8a8a8;transform:translateY(-50%) scaleX(0.9835);">Masks</span>
<div style="left:43px;top:598px;width:10.6px;height:10px;background:#1a1a1a;"></div>
<svg style="left:90px;top:599.5px;" width="7" height="8" viewBox="0 0 7 8"><path d="M0.6 0.6L6.4 4L0.6 7.4Z" fill="#c8c8c8"/></svg>
<div style="left:103px;top:599px;width:9.5px;height:9px;background:#3fb0b0;"></div>
<span class="t s" style="left:117.8px;top:603.4px;font-size:9.5px;color:#a8a8a8;transform:translateY(-50%) scaleX(0.9469);">Mask 1</span>
<div style="left:225px;top:597px;width:51px;height:12.5px;background:#1a1a1a;"></div>
<span class="t s" style="left:230px;top:603.4px;font-size:9.5px;color:#d0d0d0;transform:translateY(-50%) scaleX(1.0055);">Add</span>
<svg style="left:265.4px;top:600.6px;" width="8" height="6" viewBox="0 0 8 6"><path d="M1 1.4L4 4.4L7 1.4" fill="none" stroke="#b0b0b0" stroke-width="1.1"/></svg>
<div style="left:281.5px;top:598px;width:10.5px;height:10.5px;background:#1a1a1a;"></div>
<span class="t s" style="left:294.7px;top:603.4px;font-size:9.5px;color:#b0b0b0;transform:translateY(-50%) scaleX(1.0108);">Inverted</span>
<svg style="left:76px;top:614px;" width="7" height="8" viewBox="0 0 7 8"><path d="M0.6 0.6L6.4 4L0.6 7.4Z" fill="#c8c8c8"/></svg>
<span class="t s" style="left:90px;top:617.6px;font-size:9.5px;color:#a8a8a8;transform:translateY(-50%) scaleX(1.0015);">Transform</span>
<span class="t s" style="left:224px;top:617.8px;font-size:9.5px;color:#3d8de6;transform:translateY(-50%) scaleX(0.9666);">Reset</span>
<div style="left:2px;top:704px;width:1276px;height:1px;background:#1a1a1a;"></div>
<div style="left:224px;top:706px;width:109px;height:12px;background:#2b2b2b;"></div>
<span class="t s" style="left:230.6px;top:712px;font-size:8.5px;color:#a0a0a0;transform:translateY(-50%) scaleX(0.9805);">Toggle Switches / Modes</span>
<svg style="left:5px;top:706.5px;" width="11" height="11" viewBox="0 0 11 11"><rect x="1" y="1" width="6" height="6" fill="none" stroke="#3b8eea" stroke-width="1.2"/><rect x="4" y="4" width="6" height="6" fill="#3b8eea"/></svg>
<svg style="left:20.5px;top:706.5px;" width="11" height="11" viewBox="0 0 11 11"><rect x="1" y="1" width="6" height="6" fill="none" stroke="#c0c0c0" stroke-width="1.2"/><circle cx="7" cy="7" r="3" fill="none" stroke="#c0c0c0" stroke-width="1.2"/></svg>
<svg style="left:36px;top:706.5px;" width="11" height="11" viewBox="0 0 11 11"><path d="M3 1C1.8 1 2.6 5 1 5.5C2.6 6 1.8 10 3 10M8 1C9.2 1 8.4 5 10 5.5C8.4 6 9.2 10 8 10" fill="none" stroke="#c0c0c0" stroke-width="1.2"/><rect x="4.6" y="2" width="1.8" height="7" fill="#c0c0c0"/></svg>
<div style="left:445px;top:552px;width:1px;height:152px;background:#1a1a1a;"></div>
<div style="left:447px;top:522px;width:831px;height:30px;background:#232323;"></div>
<div style="left:452px;top:527.5px;width:808px;height:6.5px;background:#6e6e6e;"></div>
<div style="left:446px;top:527.5px;width:6.5px;height:6.5px;background:#3b8eea;border-radius:3px 0 0 3px;"></div>
<div style="left:1260px;top:527.5px;width:4px;height:6.5px;background:#3b8eea;border-radius:0 3px 3px 0;"></div>
<div style="left:451.7px;top:547.5px;width:1.0px;height:3.0px;background:#757575;"></div>
<span class="t s" style="left:446.5px;top:541.6px;font-size:8px;color:#9e9e9e;transform:translateY(-50%) scaleX(1.0248);">:00s</span>
<div style="left:505.5px;top:547.5px;width:1.0px;height:3.0px;background:#757575;"></div>
<span class="t s" style="left:499.4px;top:541.6px;font-size:8px;color:#9e9e9e;transform:translateY(-50%) scaleX(0.8988);">02s</span>
<div style="left:559.3px;top:547.5px;width:1.0px;height:3.0px;background:#757575;"></div>
<span class="t s" style="left:553.1999999999999px;top:541.6px;font-size:8px;color:#9e9e9e;transform:translateY(-50%) scaleX(0.8988);">04s</span>
<div style="left:613.0999999999999px;top:547.5px;width:1.0px;height:3.0px;background:#757575;"></div>
<span class="t s" style="left:606.9999999999999px;top:541.6px;font-size:8px;color:#9e9e9e;transform:translateY(-50%) scaleX(0.8988);">06s</span>
<div style="left:666.9px;top:547.5px;width:1.0px;height:3.0px;background:#757575;"></div>
<span class="t s" style="left:660.8px;top:541.6px;font-size:8px;color:#9e9e9e;transform:translateY(-50%) scaleX(0.8988);">08s</span>
<div style="left:720.7px;top:547.5px;width:1.0px;height:3.0px;background:#757575;"></div>
<span class="t s" style="left:714.6px;top:541.6px;font-size:8px;color:#9e9e9e;transform:translateY(-50%) scaleX(0.8988);">10s</span>
<div style="left:774.5px;top:547.5px;width:1.0px;height:3.0px;background:#757575;"></div>
<span class="t s" style="left:768.4px;top:541.6px;font-size:8px;color:#9e9e9e;transform:translateY(-50%) scaleX(0.8988);">12s</span>
<div style="left:828.3px;top:547.5px;width:1.0px;height:3.0px;background:#757575;"></div>
<span class="t s" style="left:822.1999999999999px;top:541.6px;font-size:8px;color:#9e9e9e;transform:translateY(-50%) scaleX(0.8988);">14s</span>
<div style="left:882.0999999999999px;top:547.5px;width:1.0px;height:3.0px;background:#757575;"></div>
<span class="t s" style="left:875.9999999999999px;top:541.6px;font-size:8px;color:#9e9e9e;transform:translateY(-50%) scaleX(0.8988);">16s</span>
<div style="left:935.9px;top:547.5px;width:1.0px;height:3.0px;background:#757575;"></div>
<span class="t s" style="left:929.8px;top:541.6px;font-size:8px;color:#9e9e9e;transform:translateY(-50%) scaleX(0.8988);">18s</span>
<div style="left:989.7px;top:547.5px;width:1.0px;height:3.0px;background:#757575;"></div>
<span class="t s" style="left:983.6px;top:541.6px;font-size:8px;color:#9e9e9e;transform:translateY(-50%) scaleX(0.8988);">20s</span>
<div style="left:1043.5px;top:547.5px;width:1.0px;height:3.0px;background:#757575;"></div>
<span class="t s" style="left:1037.4px;top:541.6px;font-size:8px;color:#9e9e9e;transform:translateY(-50%) scaleX(0.8988);">22s</span>
<div style="left:1097.3px;top:547.5px;width:1.0px;height:3.0px;background:#757575;"></div>
<span class="t s" style="left:1091.2px;top:541.6px;font-size:8px;color:#9e9e9e;transform:translateY(-50%) scaleX(0.8988);">24s</span>
<div style="left:1151.1px;top:547.5px;width:1.0px;height:3.0px;background:#757575;"></div>
<span class="t s" style="left:1145.0px;top:541.6px;font-size:8px;color:#9e9e9e;transform:translateY(-50%) scaleX(0.8988);">26s</span>
<div style="left:1204.8999999999999px;top:547.5px;width:1.0px;height:3.0px;background:#757575;"></div>
<span class="t s" style="left:1198.8px;top:541.6px;font-size:8px;color:#9e9e9e;transform:translateY(-50%) scaleX(0.8988);">28s</span>
<div style="left:1258.7px;top:547.5px;width:1.0px;height:3.0px;background:#757575;"></div>
<span class="t s" style="left:1252.6000000000001px;top:541.6px;font-size:8px;color:#9e9e9e;transform:translateY(-50%) scaleX(0.8988);">30s</span>
<div style="left:452px;top:552px;width:808px;height:12.5px;background:#6c6c6c;"></div>
<div style="left:446px;top:552px;width:6.5px;height:12.5px;background:#3b8eea;border-radius:3px 0 0 3px;"></div>
<div style="left:1260px;top:552px;width:4.5px;height:12.5px;background:#3b8eea;border-radius:0 3px 3px 0;"></div>
<div style="left:452px;top:564px;width:808px;height:5px;background:#123c15;"></div>
<div style="left:452px;top:565px;width:808px;height:3px;background:#2dbb3c;"></div>
<div style="left:447px;top:568.5px;width:813px;height:135.5px;background:#333333;"></div>
<div style="left:447px;top:568.5px;width:5px;height:135.5px;background:#2b2b2b;"></div>
<div style="left:452.5px;top:569px;width:807.5px;height:13px;background:#843a3a;"></div>
<div style="left:447px;top:582.3px;width:813px;height:1.0px;background:#262626;"></div>
<div style="left:447px;top:596.4px;width:813px;height:1.0px;background:#262626;"></div>
<div style="left:447px;top:610.4px;width:813px;height:1.0px;background:#262626;"></div>
<div style="left:447px;top:624.3px;width:813px;height:1.0px;background:#262626;"></div>
<div style="left:1264.5px;top:522px;width:13.5px;height:182px;background:#232323;"></div>
<svg style="left:1266.5px;top:553px;" width="11" height="13" viewBox="0 0 11 13"><path d="M0.6 0.6H10.4V7.6L5.5 12.2L0.6 7.6Z" fill="#c6c6c6"/></svg>
<svg style="left:1264.5px;top:569px;" width="14" height="13" viewBox="0 0 14 13"><path d="M5 3.2L12.6 1.6V9.6L5 8Z" fill="#c6c6c6"/><circle cx="4.2" cy="8.6" r="2.6" fill="none" stroke="#c6c6c6" stroke-width="1.2"/><path d="M1 6L5 2.6" stroke="#c6c6c6" stroke-width="1.2"/></svg>
<div style="left:1264px;top:566px;width:1px;height:16px;background:#111;"></div>
<div style="left:451.5px;top:548px;width:1.0px;height:156px;background:#4d8fdc;"></div>
<svg style="left:446px;top:538px;" width="12" height="14" viewBox="0 0 12 14"><path d="M1.8 1H10.2V6.4L6 12.4L1.8 6.4Z" fill="#3b9bfa"/><path d="M4.4 5H7.6" stroke="#2a5a9a" stroke-width="1"/></svg>
<svg style="left:448px;top:584.3px;" width="8" height="10" viewBox="0 0 8 10"><path d="M1.3 0.9H6.7M1.3 9.1H6.7" stroke="#b4c0d0" stroke-width="1.2"/><path d="M4 0.9V9.1" stroke="#b4c0d0" stroke-width="1.7"/></svg>
<svg style="left:448px;top:598.3px;" width="8" height="10" viewBox="0 0 8 10"><path d="M1.3 0.9H6.7M1.3 9.1H6.7" stroke="#b4c0d0" stroke-width="1.2"/><path d="M4 0.9V9.1" stroke="#b4c0d0" stroke-width="1.7"/></svg>
<svg style="left:448px;top:612.3px;" width="8" height="10" viewBox="0 0 8 10"><path d="M1.3 0.9H6.7M1.3 9.1H6.7" stroke="#b4c0d0" stroke-width="1.2"/><path d="M4 0.9V9.1" stroke="#b4c0d0" stroke-width="1.7"/></svg>
<div style="left:447px;top:705px;width:831px;height:13px;background:#232323;"></div>
<svg style="left:449px;top:707.5px;" width="10" height="8" viewBox="0 0 10 8"><path d="M1.4 5.6L4.6 2.2L7.8 5.6Z" fill="#b8b8b8"/></svg>
<div style="left:476px;top:711.5px;width:31px;height:1.0px;background:#3a3a3a;"></div>
<svg style="left:467px;top:707px;" width="10" height="10" viewBox="0 0 10 10"><circle cx="5" cy="5" r="3.4" fill="#232323" stroke="#c0c0c0" stroke-width="1.3"/></svg>
<svg style="left:515px;top:706.5px;" width="18" height="10" viewBox="0 0 18 10"><path d="M2.6 7.6L6.4 3L8.8 5.8L11.2 2.2L15.6 7.6Z" fill="#c0c0c0"/></svg>
<svg style="left:320px;top:632px;" width="14" height="19" viewBox="0 0 14 19"><path d="M1.8 1.6V15.6L5 12.6L7.2 17.2L9.4 16.2L7.3 11.8H11.8Z" fill="#ffffff" stroke="#000" stroke-width="1.1" stroke-linejoin="miter"/></svg>
<div style="left:947px;top:8px;width:313px;height:698px;box-shadow:3px 3px 7px 0 rgba(0,0,0,.5);"></div>
<div style="left:947px;top:8px;width:313px;height:26px;background:#ffffff;"></div>
<div style="left:1243px;top:14px;width:16px;height:16.5px;background:#e4e4e4;"></div>
<div style="left:947px;top:34px;width:313px;height:672px;background:#303030;"></div>
<div style="left:948px;top:34px;width:311px;height:671px;background:#252525;"></div>
<div style="left:948px;top:34px;width:311px;height:24px;background:#222222;"></div>
<span class="t s2" style="left:958px;top:46px;font-size:9.5px;color:#b4b4b4;transform:translateY(-50%) scaleX(1.0076);">Voronoi Shatter</span>
<div style="left:948px;top:34px;width:311px;height:1px;background:#151515;"></div>
<svg style="left:1033px;top:42px;" width="9" height="8" viewBox="0 0 9 8"><path d="M0.5 1H8.5M0.5 4H8.5M0.5 7H8.5" stroke="#c0c0c0" stroke-width="1.1"/></svg>
<div style="left:956.5px;top:65.5px;width:294.0px;height:151.5px;background:#111111;"></div>
<div style="left:957px;top:66px;width:293px;height:150px;background:#f4f4f4;"></div>
<svg style="left:957px;top:66px;" width="293" height="150" viewBox="957 66 293 150"><polygon points="1047.95,68.86 1080.8,94.49 1120.5,82.39 1106.06,121.56 1129.53,154.94 1088.02,154.04 1063.11,186.53 1052.28,146.82 1012.58,133.29 1047.95,110.37" fill="#c9c9f7" stroke="#15157c" stroke-width="1" stroke-linejoin="miter"/><polyline points="1055.53,74.99 1048.31,87.27 1052.28,107.12 1054.63,117.04 1067.26,119.75" fill="none" stroke="#15157c" stroke-width="1"/><polyline points="1032.07,121.2 1054.63,117.04" fill="none" stroke="#15157c" stroke-width="1"/><polyline points="1080.8,94.49 1067.26,119.75 1074.48,131.48 1073.58,145.38 1078.63,157.65 1082.24,160.9" fill="none" stroke="#15157c" stroke-width="1"/><polyline points="1052.28,146.82 1073.58,145.38" fill="none" stroke="#15157c" stroke-width="1"/><polyline points="1074.48,131.48 1084.77,128.96 1106.43,130.22 1116.89,150.43 1116.53,154.4" fill="none" stroke="#15157c" stroke-width="1"/><polyline points="1116.89,150.43 1123.21,144.66" fill="none" stroke="#15157c" stroke-width="1"/><polyline points="1084.77,128.96 1099.21,114.7 1093.79,90.88" fill="none" stroke="#15157c" stroke-width="1"/><polyline points="1093.79,90.88 1115.45,94.85" fill="none" stroke="#15157c" stroke-width="1"/><polyline points="1098.85,110.37 1108.59,114.7" fill="none" stroke="#15157c" stroke-width="1"/><polyline points="1099.21,114.7 1106.43,130.22" fill="none" stroke="#15157c" stroke-width="1"/><polyline points="1037.12,121.2 1051.02,145.74" fill="none" stroke="#15157c" stroke-width="1"/><polyline points="1026.3,124.62 1017.27,133.47 1023.41,137.08" fill="none" stroke="#15157c" stroke-width="1"/><polyline points="1057.34,162.34 1078.99,157.65" fill="none" stroke="#15157c" stroke-width="1"/></svg>
<div style="left:956px;top:224px;width:294px;height:180.5px;background:#282828;border-radius:4px;box-shadow:0 0 0 1px #2c2c2c;"></div>
<div style="left:956px;top:224px;width:294px;height:22px;background:#1e1e1e;border-radius:4px 4px 0 0;"></div>
<span class="t s2" style="left:1060.5px;top:234.6px;font-size:12.5px;color:#c8c8c8;transform:translateY(-50%) scaleX(0.9276);">1. SHAPE TYPE</span>
<span class="t s2" style="left:961.8px;top:264.6px;font-size:12.5px;color:#c8c8c8;transform:translateY(-50%) scaleX(0.939);">Shape Type:</span>
<div style="left:1036px;top:252.5px;width:72.8px;height:19.5px;background:#222222;border-radius:3px;"></div>
<span class="t s2" style="left:1047.5px;top:261.6px;font-size:12.5px;color:#c8c8c8;transform:translateY(-50%) scaleX(0.9315);">Voronoi</span>
<svg style="left:1091px;top:260px;" width="8" height="5" viewBox="0 0 8 5"><path d="M0.5 0.5H7.5L4 4.4Z" fill="#c8c8c8"/></svg>
<div style="left:966px;top:284px;width:275px;height:28px;background:#1f1f1f;border-radius:4px;"></div>
<div style="left:1073px;top:284px;width:168px;height:28px;background:#141414;border-radius:0 4px 4px 0;"></div>
<span class="t s2" style="left:976px;top:299.3px;font-size:12.5px;color:#c8c8c8;transform:translateY(-50%) scaleX(0.9429);">Voronoi Amount:</span>
<span class="t s2" style="left:1083px;top:299.3px;font-size:12px;color:#d8d8d8;transform:translateY(-50%) scaleX(0.9731);">50</span>
<span class="t s2" style="left:966px;top:330.1px;font-size:12.5px;color:#c8c8c8;transform:translateY(-50%) scaleX(0.9405);">You can select a layer, use its lightness to affect</span>
<span class="t s2" style="left:966px;top:346.8px;font-size:12.5px;color:#c8c8c8;transform:translateY(-50%) scaleX(0.9271);">randomness.</span>
<div style="left:966px;top:363px;width:274px;height:32.5px;background:#1f1f1f;border-radius:4px;"></div>
<div style="left:1102.5px;top:363px;width:1.0px;height:32.5px;background:#232323;"></div>
<span class="t s2" style="left:984.5px;top:378.8px;font-size:10.5px;color:#c8c8c8;transform:translateY(-50%) scaleX(0.9471);">Select Brightness Map</span>
<span class="t s2" style="left:1116.8px;top:378.8px;font-size:10.5px;color:#c8c8c8;transform:translateY(-50%) scaleX(0.9481);">Remove Brightness Map</span>
<div style="left:956px;top:413px;width:294px;height:89px;background:#282828;border-radius:4px;box-shadow:0 0 0 1px #2c2c2c;"></div>
<div style="left:956px;top:413px;width:294px;height:22.5px;background:#1e1e1e;border-radius:4px 4px 0 0;"></div>
<span class="t s2" style="left:1062.5px;top:425.1px;font-size:12.5px;color:#c8c8c8;transform:translateY(-50%) scaleX(0.9309);">2. SHAPE CLIP</span>
<span class="t s2" style="left:962px;top:449.3px;font-size:12.5px;color:#c8c8c8;transform:translateY(-50%) scaleX(0.9375);">You can select a layer, use its masks as clip shape.</span>
<div style="left:961px;top:465px;width:283px;height:32.5px;background:#1f1f1f;border-radius:4px;"></div>
<div style="left:1102.5px;top:465px;width:1.0px;height:32.5px;background:#232323;"></div>
<span class="t s2" style="left:992.5px;top:481.3px;font-size:10.5px;color:#c8c8c8;transform:translateY(-50%) scaleX(0.9525);">Select Clip Shape</span>
<span class="t s2" style="left:1129px;top:481.3px;font-size:10.5px;color:#c8c8c8;transform:translateY(-50%) scaleX(0.9476);">Remove Clip Shape</span>
<div style="left:956px;top:512px;width:294px;height:118.5px;background:#282828;border-radius:4px;box-shadow:0 0 0 1px #2c2c2c;"></div>
<div style="left:956px;top:512px;width:294px;height:22px;background:#1e1e1e;border-radius:4px 4px 0 0;"></div>
<span class="t s2" style="left:1052px;top:523.6px;font-size:12.5px;color:#c8c8c8;transform:translateY(-50%) scaleX(0.9223);">3. SHAPE OUTPUT</span>
<span class="t s2" style="left:961.8px;top:553.6px;font-size:12.5px;color:#c8c8c8;transform:translateY(-50%) scaleX(0.9389);">Output Type:</span>
<div style="left:1038px;top:539px;width:100.8px;height:20.5px;background:#222222;border-radius:3px;"></div>
<span class="t s2" style="left:1048px;top:549.1px;font-size:12.5px;color:#c8c8c8;transform:translateY(-50%) scaleX(0.9314);">Layer Masks</span>
<svg style="left:1121px;top:547.5px;" width="8" height="5" viewBox="0 0 8 5"><path d="M0.5 0.5H7.5L4 4.4Z" fill="#c8c8c8"/></svg>
<div style="left:962px;top:567.5px;width:282.5px;height:58.5px;background:#1e1e1e;box-sizing:border-box;border:1px solid #101010;border-radius:4px;"></div>
<svg style="left:969px;top:577px;" width="16" height="16" viewBox="0 0 16 16"><circle cx="8" cy="8" r="5.8" fill="#555" stroke="#fff" stroke-width="2.4"/></svg>
<span class="t s2" style="left:991px;top:587.4px;font-size:12.5px;color:#c8c8c8;transform:translateY(-50%) scaleX(0.9388);">Add Masks To Current Layer</span>
<svg style="left:969px;top:598.5px;" width="16" height="16" viewBox="0 0 16 16"><circle cx="8" cy="8" r="7" fill="#fff"/></svg>
<span class="t s2" style="left:991px;top:607.6px;font-size:12.5px;color:#c8c8c8;transform:translateY(-50%) scaleX(0.9411);">Distribute Masks To Layers</span>
<div style="left:956px;top:640px;width:293px;height:32.5px;background:#1f1f1f;border-radius:4px;"></div>
<div style="left:1102.5px;top:640px;width:1.0px;height:32.5px;background:#232323;"></div>
<span class="t s2" style="left:995px;top:656.4px;font-size:10.5px;color:#c8c8c8;transform:translateY(-50%) scaleX(0.9511);">Update Preview</span>
<span class="t s2" style="left:1139.5px;top:656.4px;font-size:10.5px;color:#c8c8c8;transform:translateY(-50%) scaleX(0.9546);">Generate Result</span>
</body></html>
